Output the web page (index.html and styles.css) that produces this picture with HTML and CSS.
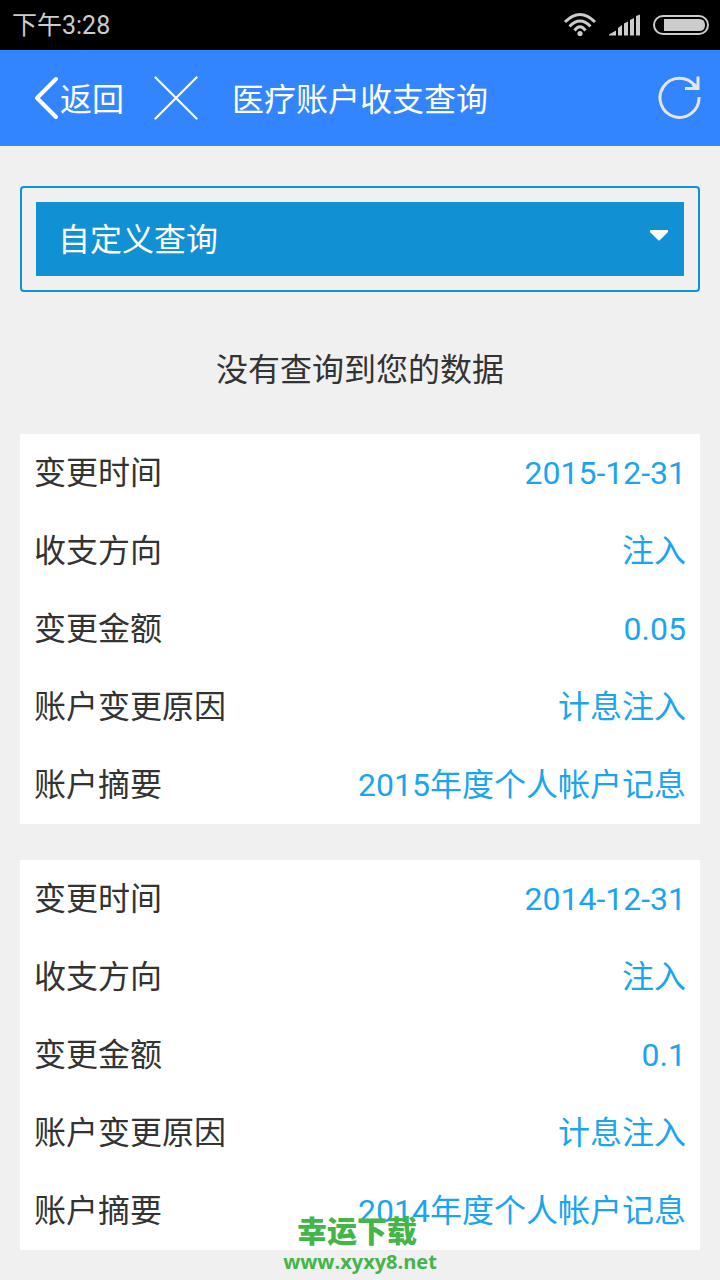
FILE: index.html
```html
<!DOCTYPE html>
<html lang="zh-CN">
<head>
<meta charset="utf-8">
<meta name="viewport" content="width=device-width, initial-scale=1">
<title>医疗账户收支查询</title>
<link rel="stylesheet" href="styles.css">
</head>
<body>
<div class="status-bar">
  <span class="clock">下午3:28</span>
  <div class="status-icons">
    <svg class="wifi" width="34" height="26" viewBox="0 0 34 26" fill="none" stroke="#ccc" stroke-width="3">
      <path d="M2 10Q17-5 32 10M6.500 14.500Q17 3.500 27.500 14.500M11.500 18.500Q17 11 22.500 18.500"/>
      <circle cx="17" cy="21.500" r="2.600" fill="#ccc" stroke="none"/>
    </svg>
    <svg width="32" height="22" viewBox="0 0 32 22" fill="#ccc">
      <path d="M0 21.500V20.500L7 16.500V21.500ZM9 21.500V14L13 11V21.500ZM15 21.500V9.500L19 7.500V21.500ZM21 21.500V6L25 4V21.500ZM27 21.500V2L31 .5V21.500Z"/>
    </svg>
    <svg width="56" height="20" viewBox="0 0 56 20">
      <rect x="1" y="1" width="54" height="18" rx="9" fill="none" stroke="#ccc" stroke-width="2"/>
      <path d="M11 4H46Q52 4 52 10T46 16H11Z" fill="#ccc"/>
    </svg>
  </div>
</div>

<header class="nav-bar">
  <button class="nav-button back" type="button">
    <svg width="26" height="44" viewBox="0 0 26 44" fill="none" stroke="#fff" stroke-width="4" stroke-linecap="round" stroke-linejoin="round"><path d="M22 3L3 22L22 41"/></svg>
    <span class="nav-label">返回</span>
  </button>
  <button class="nav-button close" type="button" aria-label="关闭">
    <svg width="44" height="44" viewBox="0 0 44 44" fill="none" stroke="#fff" stroke-width="2.200" stroke-linecap="round"><path d="M1.500 1.500L42.500 42.500M42.500 1.500L1.500 42.500"/></svg>
  </button>
  <h1 class="title nav-label">医疗账户收支查询</h1>
  <button class="nav-button refresh" type="button" aria-label="刷新">
    <svg width="44" height="44" viewBox="0 0 44 44" fill="none" stroke="#e6e6e6" stroke-width="3"><path d="M41 21A19.500 19.500 0 1 1 37 10"/><path d="M27 12.500H40V.5"/><path d="M35 8L39 12" stroke-width="4"/></svg>
  </button>
</header>

<main class="content">
  <div class="query-box">
    <div class="select-wrap">
      <select class="query-select" aria-label="查询方式"><option>自定义查询</option></select>
      <svg class="caret" width="20" height="12" viewBox="0 0 20 12" fill="#fff"><path d="M1.500 0H18.500Q20 1 18.500 2.500L11 10Q10 11 9 10L1.500 2.500Q0 1 1.500 0Z"/></svg>
    </div>
  </div>
  <p class="message">没有查询到您的数据</p>
  <section class="records">
    <dl class="card">
      <div class="row"><dt>变更时间</dt><dd>2015-12-31</dd></div>
      <div class="row"><dt>收支方向</dt><dd>注入</dd></div>
      <div class="row"><dt>变更金额</dt><dd>0.05</dd></div>
      <div class="row"><dt>账户变更原因</dt><dd>计息注入</dd></div>
      <div class="row"><dt>账户摘要</dt><dd>2015年度个人帐户记息</dd></div>
    </dl>
    <dl class="card">
      <div class="row"><dt>变更时间</dt><dd>2014-12-31</dd></div>
      <div class="row"><dt>收支方向</dt><dd>注入</dd></div>
      <div class="row"><dt>变更金额</dt><dd>0.1</dd></div>
      <div class="row"><dt>账户变更原因</dt><dd>计息注入</dd></div>
      <div class="row"><dt>账户摘要</dt><dd>2014年度个人帐户记息</dd></div>
    </dl>
  </section>
</main>

<div class="watermark">
  <strong class="watermark-name">幸运下载</strong>
  <span class="watermark-url">www.xyxy8.net</span>
</div>
</body>
</html>
```

FILE: styles.css
```css
* {
  box-sizing: border-box;
}

body {
  margin: 0;
  background: #f0f0f0;
  color: #333;
  font-family: Roboto, "Noto Sans CJK SC", sans-serif;
  font-size: 32px;
  line-height: 48px;
}

svg {
  display: block;
  flex: none;
}

.status-bar {
  display: flex;
  align-items: center;
  justify-content: space-between;
  height: 50px;
  padding: 0 11px 0 12px;
  background: #000;
  color: #ccc;
}

.clock {
  padding-top: 2px;
  font-size: 25px;
}

.status-icons {
  display: flex;
  align-items: center;
  gap: 12px;
}

.nav-bar {
  display: flex;
  align-items: center;
  height: 96px;
  padding: 0 18px 0 34px;
  background: #3385ff;
  color: #fff;
}

.nav-button {
  display: flex;
  align-items: center;
  padding: 0;
  border: 0;
  background: none;
  color: inherit;
  font: inherit;
}

.nav-label {
  padding-top: 4px;
}

.close {
  margin-left: 30px;
}

.title {
  margin: 0 0 0 34px;
  font-size: 32px;
  font-weight: 400;
}

.refresh {
  margin-left: auto;
}

.content {
  padding: 40px 20px 30px;
}

.query-box {
  padding: 14px;
  border: 2px solid #1190d4;
  border-radius: 4px;
}

.select-wrap {
  position: relative;
}

.query-select {
  display: block;
  width: 100%;
  height: 74px;
  padding: 2px 48px 0 22px;
  border: 0;
  border-radius: 0;
  background: #1190d4;
  color: #fff;
  font: inherit;
  appearance: none;
}

.caret {
  position: absolute;
  top: 28px;
  right: 15px;
  pointer-events: none;
}

.message {
  margin: 0;
  padding: 54px 0 40px;
  text-align: center;
}

.records {
  display: grid;
  gap: 36px;
}

.card {
  margin: 0;
  background: #fff;
}

.row {
  display: flex;
  justify-content: space-between;
  padding: 15px 14px;
}

dd {
  margin: 0;
  color: #1ba5f0;
}

.watermark {
  position: absolute;
  top: 1214px;
  left: 0;
  right: 0;
  display: flex;
  flex-direction: column;
  align-items: center;
  color: #44b549;
  font-weight: 700;
  pointer-events: none;
}

.watermark-name {
  padding-right: 6px;
  font-size: 30px;
  line-height: 36px;
}

.watermark-url {
  font-family: "Open Sans", sans-serif;
  font-size: 20px;
  line-height: 24px;
}
```
